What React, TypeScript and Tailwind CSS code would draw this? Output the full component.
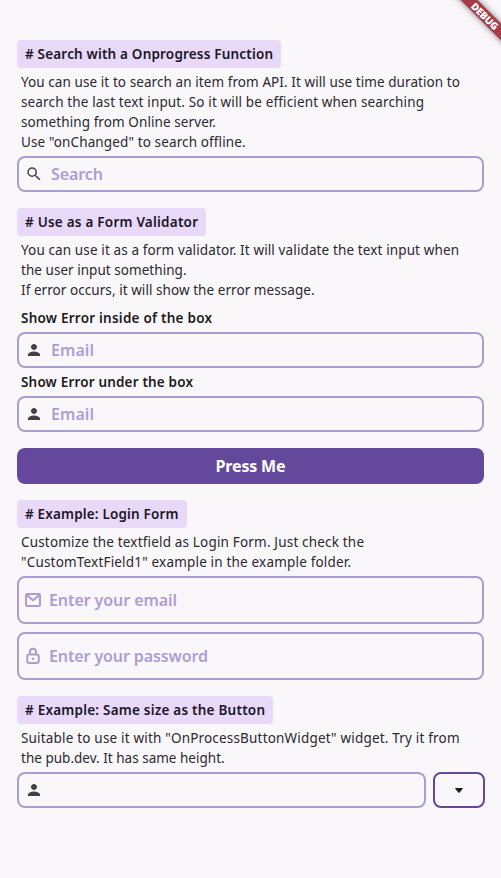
import type { ReactNode } from "react";

function Tag({ children, className }: { children: ReactNode; className: string }) {
  return (
    <h2
      className={`mt-4 flex h-7 items-center whitespace-nowrap rounded-[4px] bg-[#e8d9f9] pl-2 text-[13.5px] font-semibold text-[#1d1626] ${className}`}
    >
      {children}
    </h2>
  );
}

function Description({ lines }: { lines: [string, string][] }) {
  return (
    <p className="mt-1 pl-1 text-[13.5px] leading-5 text-[#2c282f]">
      {lines.map(([text, tracking]) => (
        <span key={text} className={`block whitespace-nowrap ${tracking}`}>
          {text}
        </span>
      ))}
    </p>
  );
}

function Field({ icon, hint, className = "" }: { icon: ReactNode; hint?: ReactNode; className?: string }) {
  return (
    <div className={`flex items-center rounded-[8px] border-2 border-[#ab9dd0] text-[16px] font-semibold text-[#ae9dd5] ${className}`}>
      {icon}
      {hint}
    </div>
  );
}

function SearchIcon() {
  return (
    <svg viewBox="0 0 24 24" className="ml-[6px] size-[18px] shrink-0 fill-[#49454d]">
      <path d="M15.5 14h-.79l-.28-.27A6.471 6.471 0 0 0 16 9.5 6.5 6.5 0 1 0 9.5 16c1.61 0 3.09-.59 4.23-1.57l.27.28v.79l5 4.99L20.49 19l-4.99-5zm-6 0C7.01 14 5 11.99 5 9.5S7.01 5 9.5 5 14 7.01 14 9.5 11.99 14 9.5 14z" />
    </svg>
  );
}

function PersonIcon() {
  return (
    <svg viewBox="0 0 24 24" className="ml-[6px] size-[18px] shrink-0 fill-[#434046]">
      <path d="M12 12c2.21 0 4-1.79 4-4s-1.79-4-4-4-4 1.79-4 4 1.79 4 4 4zm0 2c-2.67 0-8 1.34-8 4v2h16v-2c0-2.66-5.33-4-8-4z" />
    </svg>
  );
}

function MailIcon() {
  return (
    <svg viewBox="0 0 16 14" className="ml-[6px] h-[14px] w-4 shrink-0 fill-none stroke-[#ab9dd0] stroke-2">
      <rect x="1" y="1" width="14" height="12" rx="1.2" />
      <path d="M2 2.4 8 7.2l6-4.8" strokeLinejoin="round" />
    </svg>
  );
}

function LockIcon() {
  return (
    <svg viewBox="0 0 16 18" className="ml-[6px] h-[18px] w-4 shrink-0 fill-none stroke-[#ab9dd0] stroke-2">
      <rect x="2.2" y="7.4" width="11.6" height="8.6" rx="2.2" />
      <path d="M5 7.4V4.8a3 3 0 0 1 6 0v2.6" />
      <circle cx="8" cy="11.7" r="1.2" className="fill-[#ab9dd0] stroke-none" />
    </svg>
  );
}

function DebugRibbon() {
  return (
    <div className="pointer-events-none absolute right-0 top-0 size-20 overflow-hidden">
      <div className="absolute left-[14px] top-[10px] flex h-3 w-[100px] rotate-45 items-center justify-center bg-[#a83c4a] text-[10px] font-black leading-3 text-white shadow-[0_0_6px_rgba(0,0,0,0.5)]">
        <span className="tracking-[-0.2px]">DEBUG</span>
      </div>
    </div>
  );
}

export default function App() {
  return (
    <main className="relative flex h-[878px] w-[501px] flex-col overflow-hidden bg-[#faf7fb] px-[17px] pt-6 font-['Noto_Sans','Open_Sans',sans-serif]">
      <DebugRibbon />

      <Tag className="w-[264px] tracking-[0.181px]"># Search with a Onprogress Function</Tag>
      <Description
        lines={[
          ["You can use it to search an item from API. It will use time duration to", "tracking-[0.081px]"],
          ["search the last text input. So it will be efficient when searching", "tracking-[0.143px]"],
          ["something from Online server.", "tracking-[0.09px]"],
          ['Use "onChanged" to search offline.', "tracking-[0.125px]"],
        ]}
      />
      <Field className="mt-1 h-9" icon={<SearchIcon />} hint={<span className="ml-2 tracking-[-0.078px]">Search</span>} />

      <Tag className="w-[189px] tracking-[0.226px]"># Use as a Form Validator</Tag>
      <Description
        lines={[
          ["You can use it as a form validator. It will validate the text input when", "tracking-[0.122px]"],
          ["the user input something.", "tracking-[0.04px]"],
          ["If error occurs, it will show the error message.", "tracking-[0.06px]"],
        ]}
      />
      <h3 className="mt-2 pl-1 text-[13.5px] font-semibold leading-5 tracking-[0.234px] text-[#1d1a20]">Show Error inside of the box</h3>
      <Field className="mt-1 h-9" icon={<PersonIcon />} hint={<span className="ml-2 tracking-[0.07px]">Email</span>} />
      <h3 className="mt-1 pl-1 text-[13.5px] font-semibold leading-5 tracking-[0.173px] text-[#1d1a20]">Show Error under the box</h3>
      <Field className="mt-1 h-9" icon={<PersonIcon />} hint={<span className="ml-2 tracking-[0.07px]">Email</span>} />

      <button className="mt-4 flex h-9 items-center justify-center rounded-[8px] bg-[#64489b] text-[16px] font-bold tracking-[-0.17px] text-white">
        Press Me
      </button>

      <Tag className="w-[170px] tracking-[0.165px]"># Example: Login Form</Tag>
      <Description
        lines={[
          ["Customize the textfield as Login Form. Just check the", "tracking-[0.176px]"],
          ['"CustomTextField1" example in the example folder.', "tracking-[0.184px]"],
        ]}
      />
      <Field className="mt-1 h-12" icon={<MailIcon />} hint={<span className="ml-2 tracking-[-0.079px]">Enter your email</span>} />
      <Field className="mt-2 h-12" icon={<LockIcon />} hint={<span className="ml-2 tracking-[-0.111px]">Enter your password</span>} />

      <Tag className="w-[256px] tracking-[0.222px]"># Example: Same size as the Button</Tag>
      <Description
        lines={[
          ['Suitable to use it with "OnProcessButtonWidget" widget. Try it from', "tracking-[0.185px]"],
          ["the pub.dev. It has same height.", "tracking-[0.015px]"],
        ]}
      />
      <div className="mr-[-1px] mt-1 flex gap-[7px]">
        <Field className="h-9 flex-1" icon={<PersonIcon />} />
        <button className="flex h-9 w-[52px] items-center justify-center rounded-[8px] border-2 border-[#64489b]">
          <svg viewBox="0 0 8 5" className="h-[5px] w-2 fill-[#1d1a20]">
            <path d="M.8 0h6.4q.8 0 .6.8L4.6 4.5q-.6.5-1.2 0L.2.8Q0 0 .8 0z" />
          </svg>
        </button>
      </div>
    </main>
  );
}
